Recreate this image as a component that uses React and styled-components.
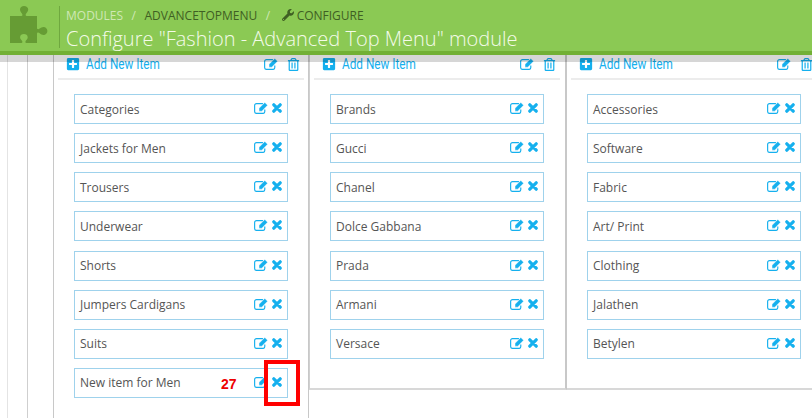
import styled, { createGlobalStyle } from "styled-components";
import { FaPlusSquare, FaRegTrashAlt, FaWrench } from "react-icons/fa";

const GlobalStyle = createGlobalStyle`
  html, body {
    margin: 0;
    padding: 0;
    background: #fff;
    overflow: hidden;
  }
  body {
    font-family: "Open Sans", "Liberation Sans", sans-serif;
  }
`;

const Page = styled.div`
  width: 812px;
  height: 418px;
  overflow: hidden;
  position: relative;
`;

const Header = styled.header`
  position: relative;
  z-index: 2;
  height: 51px;
  display: flex;
  align-items: flex-start;
  background: #8bc954;
  border-bottom: 4px solid #72b035;
  box-shadow: 0 7px 0 rgba(0, 0, 0, 0.16);
`;

const LogoBox = styled.div`
  width: 59px;
  height: 42px;
  margin-top: 6px;
  display: flex;
  justify-content: center;
  align-items: flex-start;
  border-right: 1px solid #6fa83f;
`;

const HeadText = styled.div`
  padding-left: 6px;
  padding-top: 6px;
`;

const Crumbs = styled.div`
  display: flex;
  align-items: center;
  height: 18px;
  font-size: 12px;
  white-space: nowrap;
`;

const Crumb = styled.span`
  color: ${(p) => (p.$light ? "#cfe8b4" : "#3f5f23")};
  display: flex;
  align-items: center;
  gap: 3px;
`;

const Slash = styled.span`
  margin: 0 8.5px;
  color: #cfe8b4;
`;

const Wrench = styled(FaWrench)`
  margin-left: 3px;
`;

const Title = styled.h1`
  margin: 2px 0 0;
  font-size: 20px;
  line-height: 25px;
  font-weight: 300;
  color: #f4fbe9;
  white-space: nowrap;
`;

const Body = styled.div`
  display: flex;
  height: 363px;
`;

const Rail = styled.div`
  width: ${(p) => p.$w}px;
  flex: none;
  border-right: 1px solid ${(p) => p.$c};
`;

const Column = styled.section`
  flex: none;
  width: ${(p) => p.$w}px;
  height: ${(p) => (p.$tall ? "363px" : "335px")};
  box-sizing: border-box;
  padding-left: 4px;
  border-left: ${(p) => p.$bl ?? 0}px solid #d0d0d0;
  border-right: ${(p) => p.$br ?? 0}px solid #c8c8c8;
  border-bottom: ${(p) => (p.$tall ? "none" : "2px solid #d8d8d8")};
`;

const ColHead = styled.div`
  width: 246px;
  height: 25px;
  box-sizing: border-box;
  display: flex;
  align-items: center;
  padding: 0 4px 5px 8px;
  border-bottom: 2px solid #ececec;
  color: #15b0ee;
`;

const AddLink = styled.a`
  display: flex;
  align-items: center;
  gap: 6px;
  flex: 1;
  font-family: "Roboto", sans-serif;
  font-size: 15px;
  color: #15b0ee;
`;

const AddText = styled.span`
  display: inline-block;
  white-space: nowrap;
  transform: scaleX(0.785);
  transform-origin: left center;
`;

const HeadTools = styled.div`
  display: flex;
  align-items: center;
  gap: 9px;
`;

const List = styled.div`
  display: flex;
  flex-direction: column;
  gap: 9.15px;
  padding: 14px 0 0 16px;
`;

const Row = styled.div`
  position: relative;
  width: 214px;
  height: 30px;
  box-sizing: border-box;
  display: flex;
  align-items: center;
  padding: 0 5px 0 5px;
  border: 1px solid #9fd2ec;
  font-size: 12px;
  color: #555;
  background: #fff;
`;

const RowLabel = styled.span`
  flex: 1;
`;

const RowTools = styled.div`
  display: flex;
  align-items: center;
  gap: 4px;
  margin-bottom: 2px;
  color: #15b0ee;
`;

const Count = styled.span`
  position: absolute;
  left: 146px;
  top: 7px;
  font-family: "Liberation Sans", sans-serif;
  font-size: 14px;
  font-weight: 700;
  color: #ee0000;
`;

const Marker = styled.div`
  position: absolute;
  left: 264px;
  top: 360px;
  width: 36px;
  height: 46px;
  box-sizing: border-box;
  border: 4px solid #ff0000;
  z-index: 3;
`;

const columns = [
  {
    box: { $w: 255, $br: 1, $tall: true },
    items: ["Categories", "Jackets for Men", "Trousers", "Underwear", "Shorts", "Jumpers Cardigans", "Suits", "New item for Men"],
  },
  {
    box: { $w: 258, $bl: 1, $br: 2 },
    items: ["Brands", "Gucci", "Chanel", "Dolce Gabbana", "Prada", "Armani", "Versace"],
  },
  {
    box: { $w: 300 },
    items: ["Accessories", "Software", "Fabric", "Art/ Print", "Clothing", "Jalathen", "Betylen"],
  },
];

function Puzzle() {
  return (
    <svg width="40" height="38" viewBox="0 0 40 38">
      <path
        fill="#669c34"
        d="M0 10h11.5c1.2 0 1.2-1.500.4-2.600C10.800 6 10 5 10 3.500 10 1.300 11.800 0 14 0s4.200 1.300 4.200 3.500c0 1.500-.9 2.500-2 3.900-.8 1.100-.8 2.600.6 2.600H27v12c0 1.400 1.400 1.500 2.700.6 1.200-.9 2.300-1.700 3.800-1.700 2.200 0 3.900 1.800 3.900 4s-1.700 4-3.900 4c-1.500 0-2.600-.8-3.800-1.700-1.300-.9-2.700-.8-2.700.6V37H16.500c-1.400 0-1.400-1.400-.5-2.500.9-1.200 1.700-1.900 1.700-3.300 0-2.100-1.800-3.200-3.800-3.200s-3.800 1.100-3.800 3.200c0 1.400.8 2.100 1.700 3.300.9 1.100.9 2.500-.5 2.500H0z"
      />
    </svg>
  );
}

function EditIcon() {
  return (
    <svg width="14" height="12" viewBox="0 0 15 13">
      <path
        fill="none"
        stroke="currentColor"
        strokeWidth="1.25"
        d="M11.600 8v2.400a2 2 0 0 1-2 2H2.600a2 2 0 0 1-2-2V3.800a2 2 0 0 1 2-2h7"
      />
      <path
        fill="currentColor"
        stroke="#fff"
        strokeWidth="0.4"
        d="M5.400 6.900 11.600.5l3 3-6.300 6.400H5.400z"
      />
    </svg>
  );
}

function CloseIcon() {
  return (
    <svg width="10" height="10" viewBox="0 0 10 10">
      <path
        fill="none"
        stroke="currentColor"
        strokeWidth="3.2"
        strokeLinecap="round"
        d="M1.800 1.800l6.400 6.400M8.200 1.800l-6.400 6.400"
      />
    </svg>
  );
}

export default function App() {
  return (
    <Page>
      <GlobalStyle />
      <Header>
        <LogoBox>
          <Puzzle />
        </LogoBox>
        <HeadText>
          <Crumbs>
            <Crumb $light>MODULES</Crumb>
            <Slash>/</Slash>
            <Crumb>ADVANCETOPMENU</Crumb>
            <Slash>/</Slash>
            <Crumb>
              <Wrench size={12} />
              CONFIGURE
            </Crumb>
          </Crumbs>
          <Title>Configure "Fashion - Advanced Top Menu" module</Title>
        </HeadText>
      </Header>
      <Body>
        <Rail $w={7} $c="#e4e4e4" />
        <Rail $w={19} $c="#cfcfcf" />
        <Rail $w={25} $c="#c8c8c8" />
        {columns.map((col) => (
          <Column key={col.items[0]} {...col.box}>
            <ColHead>
              <AddLink>
                <FaPlusSquare size={14} />
                <AddText>Add New Item</AddText>
              </AddLink>
              <HeadTools>
                <EditIcon />
                <FaRegTrashAlt size={13} />
              </HeadTools>
            </ColHead>
            <List>
              {col.items.map((item) => (
                <Row key={item}>
                  <RowLabel>{item}</RowLabel>
                  {item === "New item for Men" && <Count>27</Count>}
                  <RowTools>
                    <EditIcon />
                    <CloseIcon />
                  </RowTools>
                </Row>
              ))}
            </List>
          </Column>
        ))}
      </Body>
      <Marker />
    </Page>
  );
}
